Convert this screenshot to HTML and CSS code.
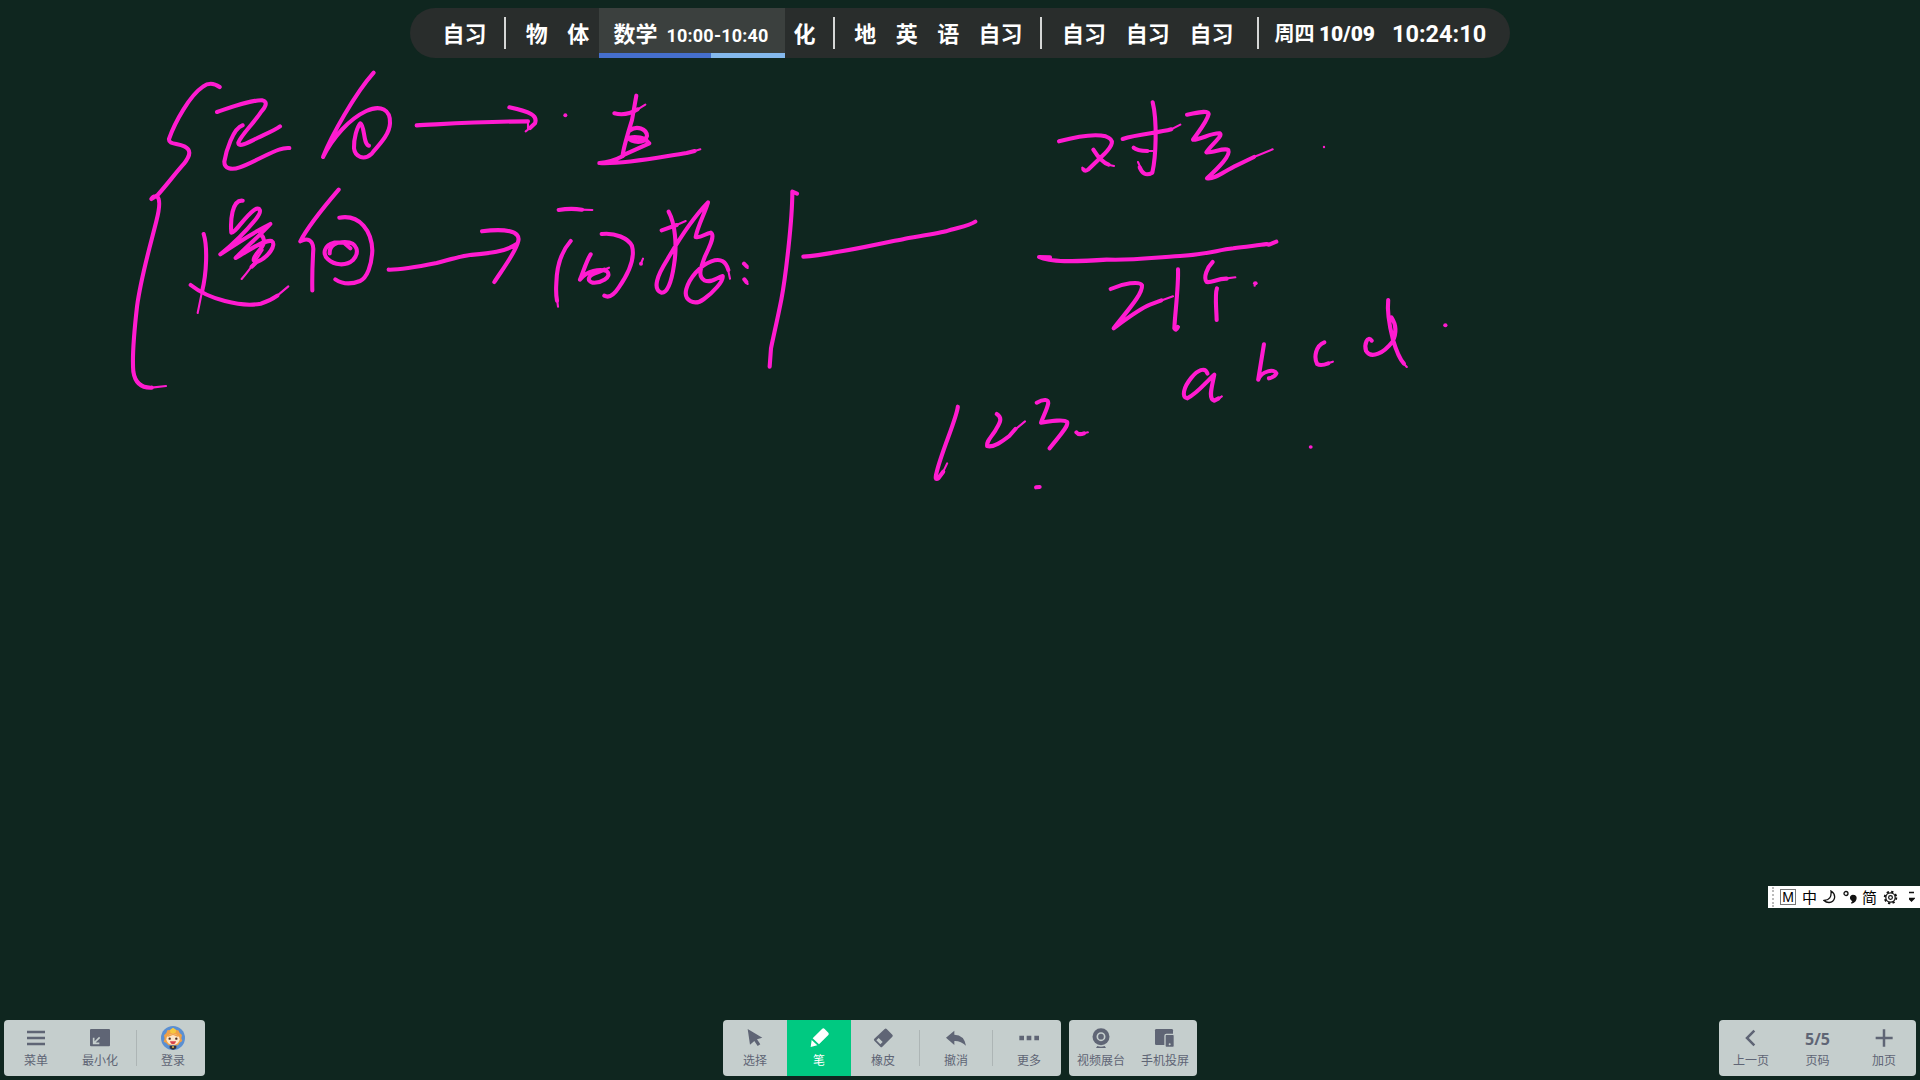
FILE: index.html
```
<!DOCTYPE html>
<html lang="zh-CN">
<head>
<meta charset="utf-8">
<title>白板</title>
<link rel="stylesheet" href="styles.css">
</head>
<body>
<main class="board">
  <svg class="ink" viewBox="0 0 1920 1080" aria-hidden="true">
    <g transform="translate(120 60) scale(.33333)">
      <path d="M299 81Q272 62 249 80C210 106 165 185 147 237C145 253 170 249 193 259C213 269 213 284 192 311C165 341 140 375 112 406L94 417Q100 406 112 410C122 420 119 445 109 484C90 560 63 650 51 740C43 810 35 880 40 935Q48 985 95 983"/>
      <path class="thin" d="M95 983L138 978"/>
      <path d="M291 156C342 139 391 120 426 121C447 125 434 143 423 156C402 189 363 225 355 248C355 264 386 247 412 234C439 221 463 211 480 199"/>
      <path d="M368 196C339 205 318 274 313 305C313 326 334 331 359 322C398 308 447 279 477 269Q493 263 508 264"/>
      <path d="M761 38C705 101 635 226 609 291C639 231 688 177 739 153C782 133 812 149 810 190C808 226 775 256 755 281C731 303 705 290 702 265C701 234 711 202 721 190C735 197 729 253 747 257"/>
      <path d="M368 422C335 418 331 485 334 518C345 520 371 474 401 451C419 438 429 451 408 477C375 517 326 563 301 583C350 550 403 516 451 492C425 521 378 562 347 594C385 573 431 538 455 543C471 552 446 593 410 606C390 605 407 584 426 561C436 545 431 527 420 523M410 606L395 620"/>
      <path class="thin" d="M428 570Q393 625 365 657M408 580L402 608"/>
      <path d="M251 522C263 560 260 640 246 695"/>
      <path class="thin" d="M246 695L233 759"/>
      <path d="M212 675C265 717 363 743 422 731Q450 723 472 707"/>
      <path class="thin" d="M472 707L505 679"/>
      <path d="M656 389C620 431 565 497 541 544C562 532 579 540 580 567C578 600 576 650 577 691"/>
      <path d="M658 473C721 462 755 515 757 571C755 617 741 654 720 663C690 675 668 673 646 658"/>
      <path d="M629 580C628 554 650 546 675 546C714 547 719 578 699 600C677 620 642 615 624 598C605 580 614 555 642 548L672 548L691 565"/>
    </g>
    <g transform="translate(400 80) scale(.33333)">
      <path d="M50 136C120 133 220 125 384 124M328 82C390 96 414 105 405 130L390 144"/>
      <path class="thin" d="M390 144L377 154M384 124L384 148"/>
      <circle class="dot" cx="496" cy="106" r="6"/>
      <path d="M709 47L696 120C684 160 671 200 668 226L748 190L738 180C710 190 690 180 688 173C710 168 734 174 741 184M690 151C710 136 740 146 741 168C735 192 697 190 681 170"/>
      <path d="M643 100C670 107 695 99 713 88M669 228C648 239 630 247 598 249C670 254 790 229 860 219L884 213"/>
      <path class="thin" d="M713 88L736 74M884 213L901 208"/>
      <path d="M-34 569C5 570 65 558 110 549C145 540 180 529 210 525C265 520 315 516 350 492M246 454C312 445 366 452 354 486C345 520 304 573 283 606"/>
    </g>
    <g transform="translate(540 170) scale(.33333)">
      <path d="M56 120Q91 114 126 119M92 213C63 246 50 290 49 340Q47 370 51 392M185 192C225 187 265 205 276 228C286 265 266 310 236 353C221 376 206 384 193 377M152 253C139 273 131 303 120 329C140 301 180 296 200 303C220 322 179 340 158 338C140 333 142 317 171 308L193 299"/>
      <path class="thin" d="M122 119L157 120M51 387L54 410M190 300L207 293M303 280L309 266"/>
      <circle class="dot" cx="303" cy="281" r="6"/>
      <path d="M386 125C405 160 412 225 402 285C395 334 382 370 364 368C336 357 353 315 380 272C415 211 462 140 504 97C494 131 472 170 467 201C483 205 496 190 512 188C525 195 513 222 495 259C480 299 474 319 493 331C515 340 529 323 548 318C551 333 521 366 492 387C462 410 430 390 439 357C448 325 480 286 514 274C544 263 558 276 565 300"/>
      <path d="M365 181L410 165M612 281L620 289M613 328L619 336"/>
      <path class="thin" d="M410 165L437 153M564 298L570 326M618 286L623 294M617 334L623 342"/>
      <path d="M771 71L757 65C757 150 737 320 724 389C711 455 700 500 693 535L689 590"/>
      <path d="M790 260C870 255 1000 226 1095 206C1150 197 1190 191 1218 184C1250 173 1285 169 1306 155"/>
    </g>
    <g transform="translate(1020 80) scale(.33333)">
      <path d="M117 184C165 171 224 161 257 169C285 179 280 194 252 223L204 269Q195 275 190 268M220 209Q243 246 266 254"/>
      <path class="thin" d="M265 254L282 258M380 213L398 213M354 246L361 262M452 149L481 134M700 232L758 208M615 596L646 592M420 663L459 649M187 263L190 269"/>
      <path d="M308 177C355 161 410 160 454 148M398 67C412 123 408 230 397 278C376 290 366 278 359 262M341 203Q351 212 382 213"/>
      <path d="M501 104C530 99 563 89 566 102C561 126 530 162 519 179C541 180 573 158 600 160C609 169 575 192 559 217C582 218 612 202 625 210C632 226 598 261 561 295C582 300 615 272 650 256L702 231"/>
      <circle class="dot" cx="912" cy="201" r="3.5"/>
      <path d="M90 532L57 531C90 547 160 546 260 539C350 542 400 532 480 528C560 523 590 511 640 505C680 499 718 496 740 492L747 494L769 485"/>
      <path d="M272 627C308 610 360 602 366 616C368 641 328 685 281 745C312 722 356 688 390 674L424 661M474 568C476 620 465 700 463 745Q468 754 474 741M578 546C562 562 549 592 560 606C576 609 593 595 620 596M591 625C584 643 589 680 590 720"/>
      <ellipse class="dot" cx="706" cy="610" rx="7" ry="6"/>
      <circle class="dot" cx="704" cy="617" r="3.5"/>
    </g>
    <g transform="translate(900 280) scale(.35714 .33333)">
      <path d="M162 380C158 417 118 510 103 575C98 595 99 601 108 594L121 575"/>
      <path class="thin" d="M120 577L132 550M320 451L350 424M510 461L526 457M890 358L901 349M1198 250L1212 245M1408 248L1419 261"/>
      <path d="M271 402C291 415 276 434 265 455C250 478 243 484 244 498C262 504 288 483 306 468L323 447M383 368C403 356 416 358 415 370C412 389 398 415 395 428C424 423 459 417 468 426C473 440 439 476 419 505M494 457Q500 466 515 460"/>
      <path d="M861 281C854 259 833 271 816 293C793 323 788 352 804 355C831 342 857 306 880 284C875 315 861 357 880 362L892 355"/>
      <path d="M1019 193L1003 299C1013 272 1048 266 1054 280Q1050 291 1033 295M1188 187C1164 197 1158 232 1168 252Q1178 259 1199 250"/>
      <path d="M1321 182C1309 165 1299 193 1305 213C1320 239 1355 218 1379 185C1395 150 1384 125 1376 112M1367 60C1364 90 1371 140 1380 178Q1395 232 1411 251"/>
      <circle class="dot" cx="1527" cy="136" r="6"/>
      <circle class="dot" cx="1150" cy="501" r="5.5"/>
      <path d="M381 622L391 621"/>
    </g>
  </svg>

  <header class="schedule">
    <span class="lesson double">自习</span><i class="divider"></i>
    <span class="lesson">物</span><span class="lesson">体</span>
    <div class="lesson current"><span>数学</span><span class="period">10:00-10:40</span><div class="progress"><div class="elapsed"></div></div></div>
    <span class="lesson after">化</span><i class="divider"></i>
    <span class="lesson">地</span><span class="lesson">英</span><span class="lesson">语</span><span class="lesson double">自习</span><i class="divider"></i>
    <span class="lesson evening">自习</span><span class="lesson evening">自习</span><span class="lesson evening">自习</span><i class="divider last"></i>
    <span class="date">周四 <b>10/09</b></span><time class="clock">10:24:10</time>
  </header>

  <aside class="ime">
    <i class="grip"></i><span class="ime-m">M</span><span class="ime-zh">中</span>
    <svg class="ime-moon" viewBox="0 0 14 14"><path d="M8 1C14 5 12 12 6 12.5Q3 12.5 1 10.5Q9 10 8 1Z"/></svg>
    <svg class="ime-punct" viewBox="0 0 14 14"><circle cx="3" cy="3.5" r="2"/><path class="solid" d="M10.500 5.500a2.400 2.400 0 1 0 .3 4.600Q10 12 8.400 13.200Q13 11.500 13 8A2.400 2.400 0 0 0 10.500 5.500Z"/></svg>
    <span class="ime-zh">简</span>
    <svg class="ime-gear" viewBox="0 0 16 16"><circle cx="8" cy="8" r="6.2" class="teeth"/><circle cx="8" cy="8" r="5"/><circle cx="8" cy="8" r="2"/></svg>
    <svg class="ime-more" viewBox="0 0 6 12"><path d="M0 1.5H5M0 7.5H5L2.5 10Z"/></svg>
  </aside>

  <footer class="dock">
    <nav class="panel">
      <button class="tool"><svg class="icon" viewBox="0 0 72 72"><path class="line" d="M9 18H63M9 36H63M9 54H63"/></svg><span>菜单</span></button>
      <button class="tool"><svg class="icon" viewBox="0 0 72 72"><rect x="6" y="9" width="60" height="52" rx="3"/><path class="cut" d="M35 34L18 51M17 35V52H34"/></svg><span>最小化</span></button>
      <i class="split"></i>
      <button class="tool"><svg class="icon" viewBox="0 0 72 72">
        <circle cx="36" cy="36" r="36" fill="#5a8fd2"/>
        <path d="M36 6L43 12L52 13L56 21L63 27L61 37L64 45L56 50L51 58H22L16 51L8 47L11 38L9 28L16 21L19 13L29 12Z" fill="#f0a046"/>
        <path d="M27 12L36 5L46 12L43 22H29Z" fill="#f6c93f"/>
        <ellipse cx="36" cy="40" rx="20" ry="17" fill="#fde6c9"/>
        <path d="M17 30Q36 18 55 30L50 32L36 27L22 32Z" fill="#f0a046"/>
        <circle cx="26" cy="38" r="3.5" fill="#4b3027"/><circle cx="46" cy="38" r="3.5" fill="#4b3027"/>
        <path d="M27 46H45Q43 55 36 55T27 46Z" fill="#d8414a"/>
        <path d="M26 59H46V67Q36 75 26 67Z" fill="#33313a"/><circle cx="36" cy="63" r="3" fill="#e9b948"/>
      </svg><span>登录</span></button>
    </nav>

    <div class="center">
      <nav class="panel">
        <button class="tool"><svg class="icon" viewBox="0 0 72 72"><path d="M14 9L58 35L42 40L52 55L44 60L34 45L21 56Z"/></svg><span>选择</span></button>
        <button class="tool active"><svg class="icon" viewBox="0 0 72 72"><path d="M45 9Q49 5 53 9L64 20Q67 24 64 27L36 55L17 37ZM14 42L31 58L11 63Z"/></svg><span>笔</span></button>
        <button class="tool"><svg class="icon" viewBox="0 0 72 72"><path fill-rule="evenodd" d="M41 9Q44 6 47 9L64 26Q67 29 64 32L34 62Q31 65 28 62L10 44Q7 41 10 38ZM16 43L28 55L35 48L23 36Z"/></svg><span>橡皮</span></button>
        <i class="split"></i>
        <button class="tool"><svg class="icon" viewBox="0 0 72 72"><path d="M6 35L31 14V26Q61 27 66 59Q50 44 31 45V57Z"/></svg><span>撤消</span></button>
        <i class="split"></i>
        <button class="tool"><svg class="icon" viewBox="0 0 72 72"><path d="M7 29H21V43H7ZM29 29H43V43H29ZM52 29H66V43H52Z"/></svg><span>更多</span></button>
      </nav>
      <nav class="panel">
        <button class="tool"><svg class="icon" viewBox="0 0 72 72"><circle cx="36" cy="32" r="25.500"/><circle class="ring" cx="36" cy="32" r="11"/><path d="M25 60Q36 64 47 60L51 66H21Z"/></svg><span>视频展台</span></button>
        <button class="tool"><svg class="icon" viewBox="0 0 72 72"><rect x="6" y="9" width="54" height="48" rx="4"/><rect class="phone" x="36" y="25" width="28" height="39" rx="4"/><circle class="key" cx="50" cy="55" r="3"/></svg><span>手机投屏</span></button>
      </nav>
    </div>

    <nav class="panel">
      <button class="tool"><svg class="icon" viewBox="0 0 72 72"><path class="line" d="M46 14L24 36L46 58"/></svg><span>上一页</span></button>
      <button class="tool page"><strong>5/5</strong><span>页码</span></button>
      <button class="tool"><svg class="icon" viewBox="0 0 72 72"><path class="line" d="M11 36H62M36 10V62"/></svg><span>加页</span></button>
    </nav>
  </footer>
</main>
</body>
</html>
```
FILE: styles.css
```
* { box-sizing: border-box; }
body {
  margin: 0;
  background: #0f261f;
  font-family: "Noto Sans CJK SC", sans-serif;
}
.board {
  position: relative;
  display: flex;
  flex-direction: column;
  height: 1080px;
  padding: 8px 4px 4px;
  overflow: hidden;
}
.ink {
  position: absolute;
  inset: 0;
  width: 1920px;
  height: 1080px;
}
.ink path {
  fill: none;
  stroke: #ff1bd0;
  stroke-width: 4.1px;
  stroke-linecap: round;
  stroke-linejoin: round;
  vector-effect: non-scaling-stroke;
}
.ink .thin { stroke-width: 2.1px; }
.ink .dot { fill: #ff1bd0; }

/* timetable */
.schedule {
  position: relative;
  display: flex;
  align-items: center;
  align-self: center;
  width: 1100px;
  height: 50px;
  padding-left: 23px;
  border-radius: 25px;
  background: #292d2c;
  color: #fff;
  font-size: 22px;
  font-weight: 700;
  line-height: 48px;
  white-space: nowrap;
}
.lesson { width: 41.500px; height: 50px; text-align: center; }
.double { width: 63px; }
.evening { width: 63.800px; }
.divider {
  width: 2px;
  height: 32px;
  margin: 0 10px 0 8px;
  background: #d5d7d6;
}
.divider.last { margin: 0 15px 0 14px; }
.current {
  position: relative;
  display: flex;
  width: 186px;
  margin-left: -.5px;
  padding-left: 15px;
  background: #3b403e;
}
.after { width: 40px; }
.period {
  margin-left: 9px;
  padding-top: 4px;
  font-family: Roboto, sans-serif;
  font-size: 18px;
  letter-spacing: .2px;
}
.progress {
  position: absolute;
  left: 0;
  right: 0;
  bottom: 0;
  height: 5px;
  background: #85b9ed;
}
.elapsed { width: 60.3%; height: 100%; background: #456fcd; }
.date { font-size: 20px; }
.date b, .clock { font-family: Roboto, sans-serif; }
.date b { font-size: 21px; }
.clock { margin-left: 17px; padding-top: 1px; font-size: 23.500px; }

/* input method bar */
.ime {
  display: flex;
  align-items: center;
  align-self: flex-end;
  gap: 6px;
  width: 152px;
  height: 22px;
  margin: 828px -4px 0 0;
  padding-left: 4px;
  background: #fff;
  color: #000;
}
.grip { height: 20px; border-left: 2px dotted #bbb; }
.ime-m {
  width: 16px;
  height: 16px;
  border: 1px solid #777;
  font: 14px/14px "Liberation Sans", sans-serif;
  text-align: center;
}
.ime-zh { width: 15px; font-size: 15px; line-height: 20px; }
.ime svg { flex: none; fill: none; stroke: #111; stroke-width: 1.3; }
.ime .solid, .ime-more path { fill: #111; }
.ime-moon, .ime-punct { width: 14px; height: 14px; }
.ime-punct + .ime-zh { margin-left: -1px; }
.ime-gear { width: 15px; height: 15px; }
.ime-gear .teeth { stroke-width: 2; stroke-dasharray: 2.4 2.47; }
.ime-more { width: 6px; height: 12px; margin-left: 5px; }

/* bottom toolbar */
.dock {
  display: grid;
  grid-template-columns: 1fr auto 1fr;
  margin-top: auto;
}
.dock > .panel { justify-self: start; }
.dock > .panel:last-child { justify-self: end; }
.center { display: flex; gap: 8px; }
.panel {
  display: flex;
  height: 56px;
  border-radius: 4px;
  overflow: hidden;
  background: #c5cecd;
}
.tool {
  display: flex;
  flex-direction: column;
  align-items: center;
  width: 64px;
  padding: 6px 0 0;
  border: 0;
  background: none;
  color: #5f6575;
  font: 400 12px/18px "Noto Sans CJK SC", sans-serif;
  white-space: nowrap;
}
.tool span { margin-top: 1px; }
.tool.active { background: #00c981; color: #fff; }
.icon { width: 24px; height: 24px; fill: currentColor; }
.line { fill: none; stroke: currentColor; stroke-width: 7.5; }
.cut { fill: none; stroke: #c5cecd; stroke-width: 5; }
.ring { fill: none; stroke: #c5cecd; stroke-width: 5; }
.phone { stroke: #c5cecd; stroke-width: 4; }
.key { fill: #c5cecd; }
.split {
  width: 1px;
  height: 36px;
  margin: 10px 4px;
  background: #adb5b5;
}
.page { width: 69px; }
.page strong {
  height: 24px;
  font: 700 16px/26px "Open Sans", sans-serif;
}
```
